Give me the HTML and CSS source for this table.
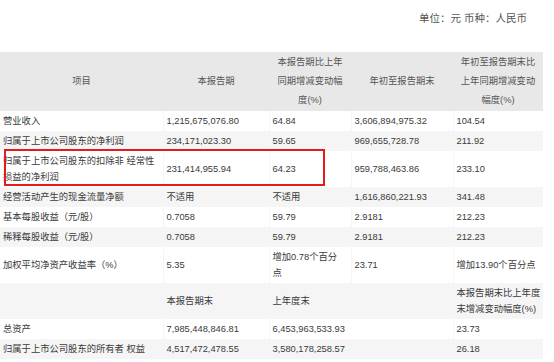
FILE: index.html
```html
<!DOCTYPE html>
<html lang="zh-CN">
<head>
  <meta charset="UTF-8">
  <title>主要会计数据和财务指标</title>
  <link rel="stylesheet" href="styles.css">
</head>
<body>
  <div class="report">
    <div class="unit">单位：元 币种：人民币</div>
    <table class="data-table">
      <colgroup>
        <col class="c1"><col class="c2"><col class="c3"><col class="c4"><col class="c5">
      </colgroup>
      <thead>
        <tr>
          <th>项目</th>
          <th>本报告期</th>
          <th>本报告期比上年<br>同期增减变动幅<br>度(%)</th>
          <th>年初至报告期末</th>
          <th>年初至报告期末比<br>上年同期增减变动<br>幅度(%)</th>
        </tr>
      </thead>
      <tbody>
        <tr><td>营业收入</td><td>1,215,675,076.80</td><td>64.84</td><td>3,606,894,975.32</td><td>104.54</td></tr>
        <tr><td>归属于上市公司股东的净利润</td><td>234,171,023.30</td><td>59.65</td><td>969,655,728.78</td><td>211.92</td></tr>
        <tr><td class="nowrap">归属于上市公司股东的扣除非 经常性<br>损益的净利润</td><td>231,414,955.94</td><td>64.23</td><td>959,788,463.86</td><td>233.10</td></tr>
        <tr><td>经营活动产生的现金流量净额</td><td>不适用</td><td>不适用</td><td>1,616,860,221.93</td><td>341.48</td></tr>
        <tr><td>基本每股收益（元/股）</td><td>0.7058</td><td>59.79</td><td>2.9181</td><td>212.23</td></tr>
        <tr><td>稀释每股收益（元/股）</td><td>0.7058</td><td>59.79</td><td>2.9181</td><td>212.23</td></tr>
        <tr><td>加权平均净资产收益率（%）</td><td>5.35</td><td class="nowrap">增加0.78个百分<br>点</td><td>23.71</td><td class="nowrap">增加13.90个百分点</td></tr>
        <tr><td></td><td>本报告期末</td><td>上年度末</td><td></td><td class="nowrap">本报告期末比上年度<br>末增减变动幅度(%)</td></tr>
        <tr><td>总资产</td><td>7,985,448,846.81</td><td colspan="2">6,453,963,533.93</td><td>23.73</td></tr>
        <tr><td>归属于上市公司股东的所有者 权益</td><td>4,517,472,478.55</td><td colspan="2">3,580,178,258.57</td><td>26.18</td></tr>
      </tbody>
    </table>
    <div class="highlight"></div>
  </div>
</body>
</html>
```

FILE: styles.css
```css
body {
  margin: 0;
  background: #fff;
  font-family: "Liberation Sans", "Noto Sans CJK SC", sans-serif;
  color: #3a3a3a;
}
.report {
  position: relative;
  width: 543px;
}
.unit {
  box-sizing: border-box;
  height: 52px;
  padding: 11px 16px 0 0;
  text-align: right;
  font-size: 10.5px;
  line-height: 14px;
  color: #555;
}
.data-table {
  width: 543px;
  table-layout: fixed;
  border-collapse: collapse;
  border-spacing: 0;
  font-size: 9.3px;
}
.c1 { width: 163px; }
.c2 { width: 106px; }
.c3 { width: 82px; }
.c4 { width: 102px; }
.c5 { width: 90px; }
.data-table th {
  background: #e8e8e8;
  color: #555;
  font-weight: normal;
  text-align: center;
  vertical-align: middle;
  line-height: 19px;
  padding: 1px 3px;
}
.data-table td {
  text-align: left;
  vertical-align: middle;
  line-height: 16px;
  padding: 2px 3px;
  border-left: 1px solid #f5f5f5;
}
.data-table td:first-child {
  border-left: none;
}
.data-table tbody tr:nth-child(even) td {
  background: #f5f5f5;
}
.nowrap {
  white-space: nowrap;
}
.highlight {
  position: absolute;
  left: 4px;
  top: 149px;
  width: 317px;
  height: 33px;
  border: 2px solid #e41b1b;
}
```
